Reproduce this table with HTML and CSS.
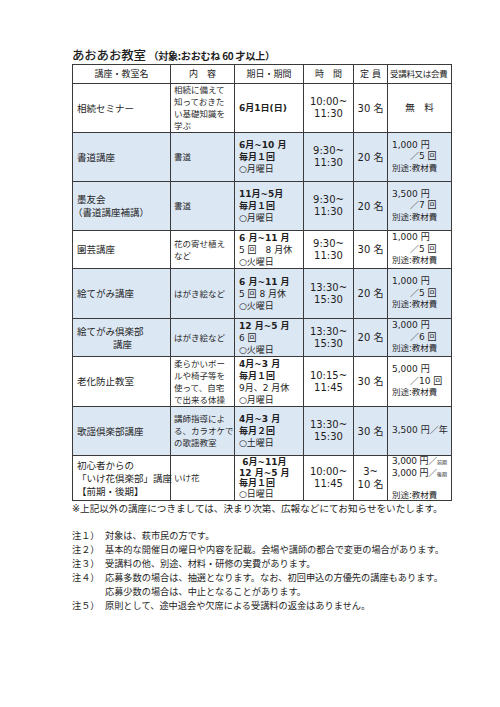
FILE: index.html
```html
<!DOCTYPE html>
<html lang="ja">
<head>
<meta charset="utf-8">
<link rel="stylesheet" href="styles.css">
</head>
<body>
<div class="page">
  <h1 class="title">あおあお教室 <span class="sub">（対象:おおむね 60 才以上）</span></h1>
  <table class="tbl">
    <colgroup>
      <col class="c1"><col class="c2"><col class="c3"><col class="c4"><col class="c5"><col class="c6">
    </colgroup>
    <thead>
      <tr class="hdr">
        <th>講座・教室名</th>
        <th>内　容</th>
        <th>期日・期間</th>
        <th>時　間</th>
        <th>定 員</th>
        <th class="fee-h">受講料又は会費</th>
      </tr>
    </thead>
    <tbody>
      <tr class="r49">
        <td class="name">相続セミナー</td>
        <td class="cont">相続に備えて<br>知っておきた<br>い基礎知識を<br>学ぶ</td>
        <td class="date"><b>6月1日(日)</b></td>
        <td class="time">10:00~<br>11:30</td>
        <td class="cap">30 名</td>
        <td class="fee free">無　料</td>
      </tr>
      <tr class="r49 blue">
        <td class="name">書道講座</td>
        <td class="cont">書道</td>
        <td class="date"><b>6月~10 月<br>毎月１回</b><br>○月曜日</td>
        <td class="time">9:30~<br>11:30</td>
        <td class="cap">20 名</td>
        <td class="fee">1,000 円<br><span class="per">／5 回</span><br><span class="ext">別途:教材費</span></td>
      </tr>
      <tr class="r49 blue">
        <td class="name">墨友会<br><span class="paren">（書道講座補講）</span></td>
        <td class="cont">書道</td>
        <td class="date"><b>11月~5月<br>毎月１回</b><br>○月曜日</td>
        <td class="time">9:30~<br>11:30</td>
        <td class="cap">20 名</td>
        <td class="fee">3,500 円<br><span class="per">／7 回</span><br><span class="ext">別途:教材費</span></td>
      </tr>
      <tr class="r38">
        <td class="name">園芸講座</td>
        <td class="cont">花の寄せ植え<br>など</td>
        <td class="date"><b>6 月~11 月</b><br>5 回　8 月休<br>○火曜日</td>
        <td class="time">9:30~<br>11:30</td>
        <td class="cap">30 名</td>
        <td class="fee">1,000 円<br><span class="per">／5 回</span><br><span class="ext">別途:教材費</span></td>
      </tr>
      <tr class="r50 blue">
        <td class="name">絵てがみ講座</td>
        <td class="cont">はがき絵など</td>
        <td class="date"><b>6 月~11 月</b><br>5 回 8 月休<br>○火曜日</td>
        <td class="time">13:30~<br>15:30</td>
        <td class="cap">20 名</td>
        <td class="fee">1,000 円<br><span class="per">／5 回</span><br><span class="ext">別途:教材費</span></td>
      </tr>
      <tr class="r38 blue">
        <td class="name">絵てがみ倶楽部<br><span class="indent">講座</span></td>
        <td class="cont">はがき絵など</td>
        <td class="date"><b>12 月~5 月</b><br>6 回<br>○火曜日</td>
        <td class="time">13:30~<br>15:30</td>
        <td class="cap">20 名</td>
        <td class="fee">3,000 円<br><span class="per">／6 回</span><br><span class="ext">別途:教材費</span></td>
      </tr>
      <tr class="r50">
        <td class="name">老化防止教室</td>
        <td class="cont">柔らかいボー<br>ルや椅子等を<br>使って、自宅<br>で出来る体操</td>
        <td class="date"><b>4月~3 月<br>毎月１回</b><br>9月、2 月休<br>○月曜日</td>
        <td class="time">10:15~<br>11:45</td>
        <td class="cap">30 名</td>
        <td class="fee">5,000 円<br><span class="per">／10 回</span><br><span class="ext">別途:教材費</span></td>
      </tr>
      <tr class="r49 blue">
        <td class="name">歌謡倶楽部講座</td>
        <td class="cont">講師指導によ<br>る、カラオケで<br>の歌謡教室</td>
        <td class="date"><b>4月~3 月<br>毎月２回</b><br>○土曜日</td>
        <td class="time">13:30~<br>15:30</td>
        <td class="cap">30 名</td>
        <td class="fee">3,500 円／年</td>
      </tr>
      <tr class="r45">
        <td class="name">初心者からの<br>「いけ花倶楽部」講座<br>【前期・後期】</td>
        <td class="cont">いけ花</td>
        <td class="date"><b>&nbsp;6月~11月<br>12 月~5 月<br>毎月１回</b><br>○日曜日</td>
        <td class="time">10:00~<br>11:45</td>
        <td class="cap">3~<br>10 名</td>
        <td class="fee">3,000 円／<span class="tiny">前期</span><br>3,000 円／<span class="tiny">後期</span><br>&nbsp;<br><span class="ext">別途:教材費</span></td>
      </tr>
    </tbody>
  </table>
  <p class="remark">※上記以外の講座につきましては、決まり次第、広報などにてお知らせをいたします。</p>
  <ul class="notes">
    <li><span class="lbl">注１）</span><span class="txt">対象は、萩市民の方です。</span></li>
    <li><span class="lbl">注２）</span><span class="txt">基本的な開催日の曜日や内容を記載。会場や講師の都合で変更の場合があります。</span></li>
    <li><span class="lbl">注３）</span><span class="txt">受講料の他、別途、材料・研修の実費があります。</span></li>
    <li><span class="lbl">注４）</span><span class="txt">応募多数の場合は、抽選となります。なお、初回申込の方優先の講座もあります。<br>応募少数の場合は、中止となることがあります。</span></li>
    <li><span class="lbl">注５）</span><span class="txt">原則として、途中退会や欠席による受講料の返金はありません。</span></li>
  </ul>
</div>
</body>
</html>
```

FILE: styles.css
```css
html, body {
  margin: 0;
  padding: 0;
  background: #ffffff;
}
body {
  font-family: "DejaVu Sans", "Noto Sans CJK JP", sans-serif;
  color: #1e1e1e;
}
.page {
  padding: 45px 0 0 72px;
  width: 378px;
}
.title {
  margin: 0;
  font-family: "Noto Sans CJK JP", sans-serif;
  font-size: 12.5px;
  font-weight: 500;
  line-height: 19px;
  height: 19px;
  white-space: nowrap;
  letter-spacing: -0.2px;
}
.title .sub {
  font-size: 10px;
  font-weight: 700;
}
.tbl {
  border-collapse: collapse;
  table-layout: fixed;
  width: 379px;
}
.c1 { width: 98px; }
.c2 { width: 64px; }
.c3 { width: 69px; }
.c4 { width: 50px; }
.c5 { width: 34px; }
.c6 { width: 64px; }
.tbl th, .tbl td {
  border: 1px solid #3a3a3a;
  padding: 0;
  vertical-align: middle;
}
.tbl th {
  font-size: 9px;
  font-weight: 400;
  height: 18px;
  line-height: 12px;
  text-align: center;
  white-space: nowrap;
}
.tbl .fee-h {
  text-align: left;
  padding-left: 2px;
  font-size: 8.5px;
  letter-spacing: -0.3px;
}
.r49 td { height: 48px; }
.r50 td { height: 49px; }
.r38 td { height: 37px; }
.r45 td { height: 44px; }
.blue td { background: #dce7f4; }
.name {
  font-size: 9.5px;
  line-height: 13px;
  padding-left: 4px !important;
  white-space: nowrap;
}
.name .paren { margin-left: -4px; }
.name .indent { padding-left: 36px; }
.cont {
  font-size: 8.5px;
  line-height: 12px;
  padding-left: 3px !important;
  white-space: nowrap;
  color: #2a2a2a;
}
.date {
  font-size: 9px;
  line-height: 12px;
  padding-left: 4px !important;
  white-space: nowrap;
}
.date b { font-weight: 700; }
.r45 .date { line-height: 10.5px; }
.time {
  font-size: 10px;
  line-height: 12px;
  text-align: center;
}
.cap {
  font-size: 10px;
  line-height: 13px;
  text-align: center;
}
.fee {
  font-size: 9px;
  line-height: 11.5px;
  padding-left: 4px !important;
  white-space: nowrap;
}
.r45 .fee { line-height: 10.5px; letter-spacing: -0.2px; }
.fee .per { padding-left: 18px; }
.fee .ext { font-size: 8.5px; letter-spacing: 0; }
.fee .tiny { font-size: 5px; letter-spacing: 0; }
.free { text-align: center; padding-left: 0 !important; font-size: 9.5px; }
.remark {
  margin: 0;
  font-size: 9.6px;
  line-height: 14px;
  padding-top: 1px;
  white-space: nowrap;
}
.notes {
  list-style: none;
  margin: 0;
  padding: 13px 0 0 0;
  font-size: 9.2px;
  line-height: 14px;
}
.notes li {
  display: flex;
  white-space: nowrap;
}
.notes .lbl { width: 33px; flex: none; }
```
